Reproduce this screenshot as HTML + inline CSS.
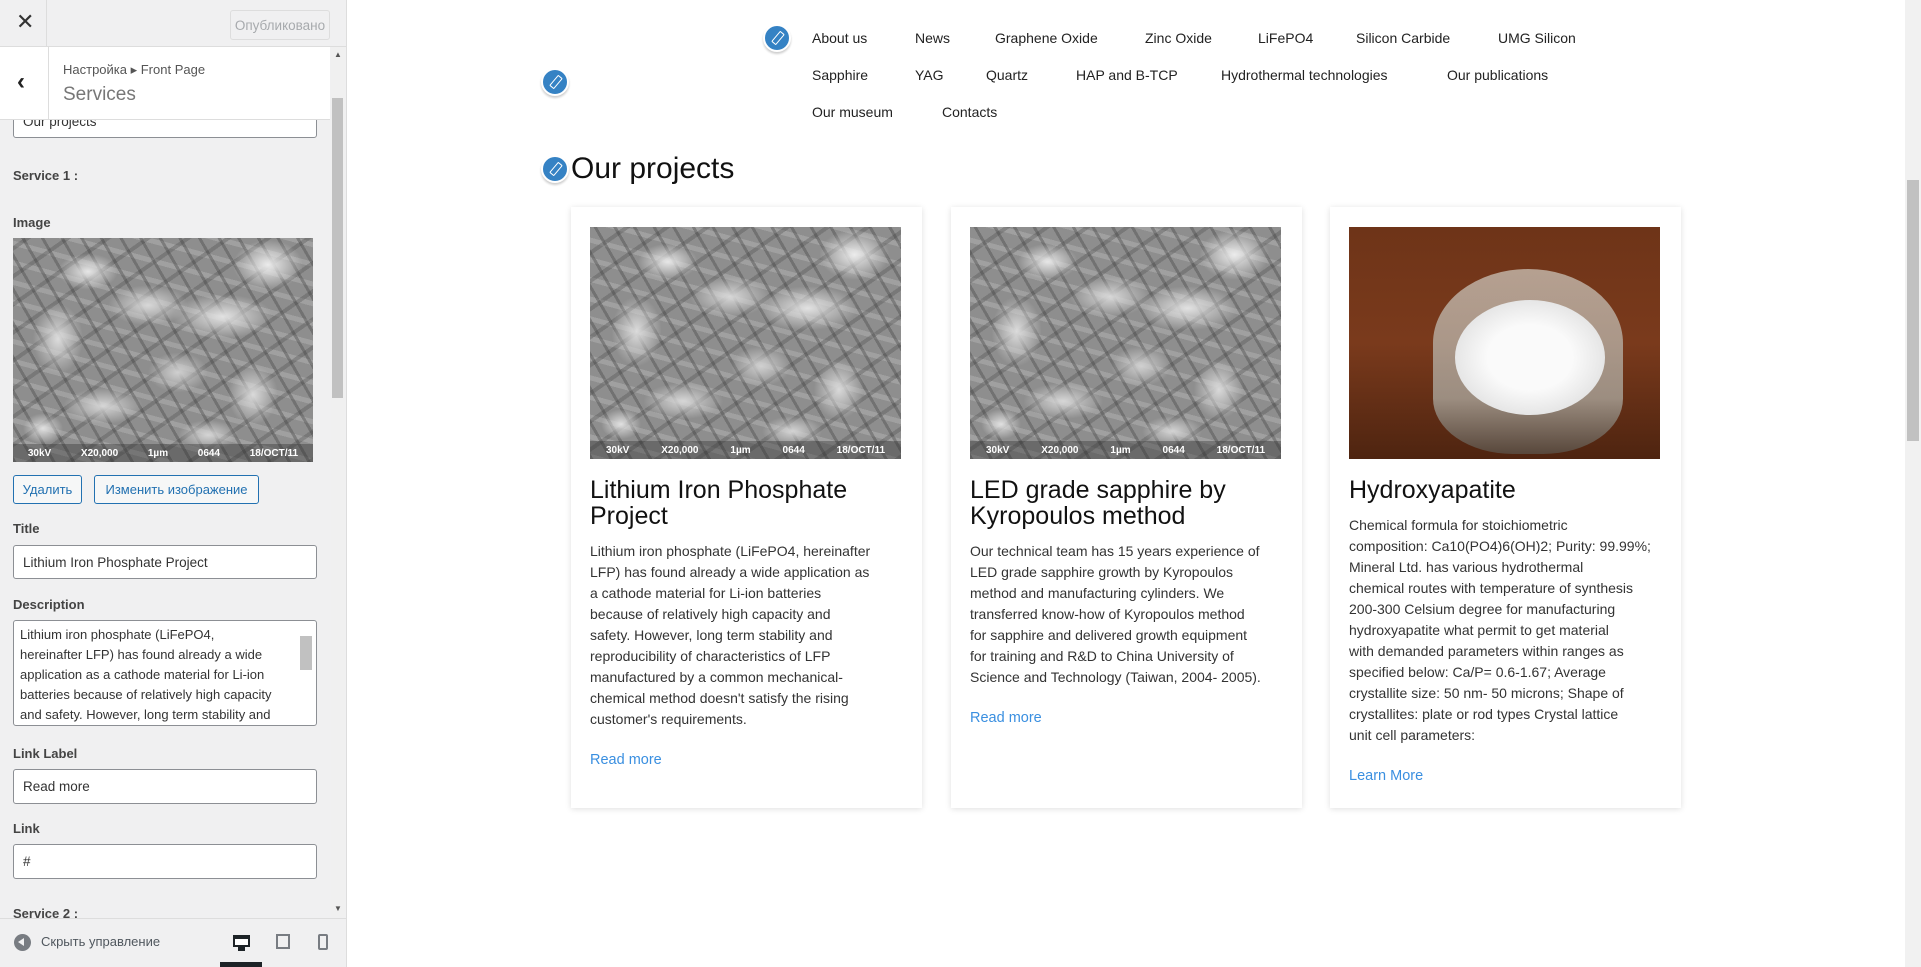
<!DOCTYPE html>
<html><head><meta charset="utf-8"><style>
*{box-sizing:border-box;margin:0;padding:0}
body{width:1921px;height:967px;overflow:hidden;background:#fff;font-family:"Liberation Sans",sans-serif;position:relative;color:#222}
.a{position:absolute}
#side{left:0;top:0;width:347px;height:967px;background:#f0f0f1;border-right:1px solid #ddd}
.lbl{position:absolute;left:13px;font-size:13px;font-weight:bold;color:#444}
.inp{position:absolute;left:13px;width:304px;background:#fff;border:1px solid #8c8f94;border-radius:3px;font-size:13.5px;color:#333;padding:0 9px;display:flex;align-items:center}
.btn{position:absolute;top:475px;height:29px;border:1px solid #2271b1;color:#2271b1;border-radius:3px;font-size:13px;display:flex;align-items:center;justify-content:center;background:#f6f7f7}
.nav{position:absolute;font-size:14px;color:#222}
.pen{position:absolute;width:28px;height:28px;border-radius:50%;background:#3582c4;border:2px solid #fff;box-shadow:0 2px 2px rgba(0,0,0,.2)}
.pen:after{content:"";position:absolute;left:10px;top:5px;width:4px;height:12px;border:1.5px solid #fff;transform:rotate(40deg);border-radius:1px}
.card{position:absolute;top:207px;width:351px;height:601px;background:#fff;box-shadow:0 1px 6px rgba(0,0,0,.13)}
.img{position:absolute;left:19px;top:20px;width:311px;height:232px}
.sem{overflow:hidden;background:
radial-gradient(ellipse 30px 18px at 25% 15%,#e6e6e6,transparent),
radial-gradient(ellipse 40px 20px at 45% 30%,#d8d8d8,transparent),
radial-gradient(ellipse 25px 35px at 15% 45%,#dcdcdc,transparent),
radial-gradient(ellipse 50px 22px at 70% 35%,#e2e2e2,transparent),
radial-gradient(ellipse 35px 25px at 85% 12%,#ececec,transparent),
radial-gradient(ellipse 30px 20px at 55% 60%,#d0d0d0,transparent),
radial-gradient(ellipse 40px 18px at 30% 75%,#d6d6d6,transparent),
radial-gradient(ellipse 25px 30px at 80% 70%,#dadada,transparent),
radial-gradient(ellipse 20px 15px at 10% 85%,#e0e0e0,transparent),
radial-gradient(ellipse 30px 15px at 65% 88%,#d4d4d4,transparent),
repeating-linear-gradient(60deg,rgba(60,60,60,.35) 0 3px,transparent 3px 17px),
repeating-linear-gradient(-35deg,rgba(70,70,70,.3) 0 4px,transparent 4px 23px),
repeating-linear-gradient(15deg,rgba(200,200,200,.3) 0 5px,transparent 5px 19px),
#8e8e8e}
.sem .bar{position:absolute;left:0;right:0;bottom:0;height:18px;font-size:10px;font-weight:bold;color:#fff;display:flex;justify-content:space-around;align-items:center;background:rgba(40,40,40,.35)}
.ttl{position:absolute;left:19px;top:270px;font-size:25px;line-height:26px;color:#111}
.dsc{position:absolute;left:19px;font-size:14px;line-height:21px;color:#333}
.lnk{position:absolute;left:19px;font-size:14.5px;color:#3a8fe0}
</style></head><body>
<div id="side" class="a">
 <div class="a" style="left:0;top:0;width:347px;height:47px;border-bottom:1px solid #ddd"></div>
 <div class="a" style="left:46px;top:0;width:1px;height:47px;background:#ddd"></div>
 <div class="a" style="left:16px;top:9px;font-size:22px;color:#333">✕</div>
 <div class="a" style="left:230px;top:10px;width:100px;height:30px;border:1px solid #ddd;border-radius:3px;color:#a7aaad;font-size:13.5px;display:flex;align-items:center;justify-content:center">Опубликовано</div>
 <div class="lbl" style="top:168px">Service 1 :</div>
 <div class="inp" style="top:104px;height:34px">Our projects</div>
 <div class="a" style="left:0;top:47px;width:330px;height:73px;background:#fff;border-bottom:1px solid #ddd"></div>
 <div class="a" style="left:48px;top:47px;width:1px;height:73px;background:#ddd"></div>
 <div class="a" style="left:17px;top:68px;font-size:24px;color:#222;font-weight:bold">‹</div>
 <div class="a" style="left:63px;top:62px;font-size:13px;color:#555">Настройка ▸ Front Page</div>
 <div class="a" style="left:63px;top:84px;font-size:19px;color:#777">Services</div>
 <div class="a" style="left:331px;top:47px;width:14px;height:870px;background:#f0f0f0"></div>
 <div class="a" style="left:332px;top:98px;width:11px;height:300px;background:#c1c1c1"></div>
 <div class="a" style="left:334px;top:50px;font-size:8px;color:#555">▲</div>
 <div class="a" style="left:334px;top:904px;font-size:8px;color:#555">▼</div>
 <div class="lbl" style="top:215px">Image</div>
 <div class="a sem" style="left:13px;top:238px;width:300px;height:224px"><div class="bar"><span>30kV</span><span>X20,000</span><span>1µm</span><span>0644</span><span>18/OCT/11</span></div></div>
 <div class="btn" style="left:13px;width:69px">Удалить</div>
 <div class="btn" style="left:94px;width:165px">Изменить изображение</div>
 <div class="lbl" style="top:521px">Title</div>
 <div class="inp" style="top:545px;height:34px">Lithium Iron Phosphate Project</div>
 <div class="lbl" style="top:597px">Description</div>
 <div class="inp" style="top:620px;height:106px;display:block;padding:4px 6px 0 6px;font-size:13px;line-height:20px;overflow:hidden">Lithium iron phosphate (LiFePO4,<br>hereinafter LFP) has found already a wide<br>application as a cathode material for Li-ion<br>batteries because of relatively high capacity<br>and safety. However, long term stability and</div>
 <div class="a" style="left:300px;top:636px;width:12px;height:34px;background:#c1c1c1"></div>
 <div class="lbl" style="top:746px">Link Label</div>
 <div class="inp" style="top:769px;height:35px">Read more</div>
 <div class="lbl" style="top:821px">Link</div>
 <div class="inp" style="top:844px;height:35px">#</div>
 <div class="lbl" style="top:906px">Service 2 :</div>
 <div class="a" style="left:0;top:918px;width:346px;height:49px;background:#f0f0f1;border-top:1px solid #ddd"></div>
 <div class="a" style="left:14px;top:934px;width:17px;height:17px;border-radius:50%;background:#787c82"></div>
 <div class="a" style="left:18px;top:938px;width:0;height:0;border-top:4.5px solid transparent;border-bottom:4.5px solid transparent;border-right:6px solid #f0f0f1"></div>
 <div class="a" style="left:41px;top:934px;font-size:13px;color:#50575e">Скрыть управление</div>
 <div class="a" style="left:233px;top:935px;width:17px;height:12px;border:2px solid #1d2327;border-top-width:4px;background:#fff"></div>
 <div class="a" style="left:238px;top:947px;width:7px;height:4px;background:#1d2327"></div>
 <div class="a" style="left:220px;top:962px;width:42px;height:5px;background:#1d2327"></div>
 <div class="a" style="left:276px;top:934px;width:14px;height:15px;border:2px solid #787c82"></div>
 <div class="a" style="left:318px;top:934px;width:10px;height:16px;border:2px solid #787c82;border-radius:2px"></div>
</div>

<div class="pen" style="left:763px;top:24px"></div>
<div class="pen" style="left:541px;top:68px"></div>
<div class="pen" style="left:541px;top:155px"></div>
<div class="nav" style="left:812px;top:30px">About us</div>
<div class="nav" style="left:915px;top:30px">News</div>
<div class="nav" style="left:995px;top:30px">Graphene Oxide</div>
<div class="nav" style="left:1145px;top:30px">Zinc Oxide</div>
<div class="nav" style="left:1258px;top:30px">LiFePO4</div>
<div class="nav" style="left:1356px;top:30px">Silicon Carbide</div>
<div class="nav" style="left:1498px;top:30px">UMG Silicon</div>
<div class="nav" style="left:812px;top:67px">Sapphire</div>
<div class="nav" style="left:915px;top:67px">YAG</div>
<div class="nav" style="left:986px;top:67px">Quartz</div>
<div class="nav" style="left:1076px;top:67px">HAP and B-TCP</div>
<div class="nav" style="left:1221px;top:67px">Hydrothermal technologies</div>
<div class="nav" style="left:1447px;top:67px">Our publications</div>
<div class="nav" style="left:812px;top:104px">Our museum</div>
<div class="nav" style="left:942px;top:104px">Contacts</div>
<div class="a" style="left:571px;top:152px;font-size:30px;color:#111">Our projects</div>

<div class="card" style="left:571px">
 <div class="img sem"><div class="bar"><span>30kV</span><span>X20,000</span><span>1µm</span><span>0644</span><span>18/OCT/11</span></div></div>
 <div class="ttl">Lithium Iron Phosphate<br>Project</div>
 <div class="dsc" style="top:334px">Lithium iron phosphate (LiFePO4, hereinafter<br>LFP) has found already a wide application as<br>a cathode material for Li-ion batteries<br>because of relatively high capacity and<br>safety. However, long term stability and<br>reproducibility of characteristics of LFP<br>manufactured by a common mechanical-<br>chemical method doesn't satisfy the rising<br>customer's requirements.</div>
 <div class="lnk" style="top:545px">Read more</div>
</div>
<div class="card" style="left:951px">
 <div class="img sem"><div class="bar"><span>30kV</span><span>X20,000</span><span>1µm</span><span>0644</span><span>18/OCT/11</span></div></div>
 <div class="ttl">LED grade sapphire by<br>Kyropoulos method</div>
 <div class="dsc" style="top:334px">Our technical team has 15 years experience of<br>LED grade sapphire growth by Kyropoulos<br>method and manufacturing cylinders. We<br>transferred know-how of Kyropoulos method<br>for sapphire and delivered growth equipment<br>for training and R&amp;D to China University of<br>Science and Technology (Taiwan, 2004- 2005).</div>
 <div class="lnk" style="top:503px">Read more</div>
</div>
<div class="card" style="left:1330px">
 <div class="img" style="background:linear-gradient(180deg,#6e3418,#7a3a1c 50%,#4e2410);overflow:hidden">
  <div class="a" style="left:84px;top:42px;width:190px;height:185px;border-radius:50% 50% 42% 42%/40% 40% 30% 30%;background:linear-gradient(180deg,rgba(210,205,195,.7),rgba(170,165,155,.8) 70%,rgba(90,80,70,.8))"></div>
  <div class="a" style="left:106px;top:73px;width:150px;height:115px;border-radius:50%;background:radial-gradient(ellipse at 50% 50%,#fafafa 40%,#e6e6e6 70%,#cfcfcf)"></div>
 </div>
 <div class="ttl">Hydroxyapatite</div>
 <div class="dsc" style="top:308px">Chemical formula for stoichiometric<br>composition: Ca10(PO4)6(OH)2; Purity: 99.99%;<br>Mineral Ltd. has various hydrothermal<br>chemical routes with temperature of synthesis<br>200-300 Celsium degree for manufacturing<br>hydroxyapatite what permit to get material<br>with demanded parameters within ranges as<br>specified below: Ca/P= 0.6-1.67; Average<br>crystallite size: 50 nm- 50 microns; Shape of<br>crystallites: plate or rod types Crystal lattice<br>unit cell parameters:</div>
 <div class="lnk" style="top:561px">Learn More</div>
</div>
<div class="a" style="left:1905px;top:0;width:16px;height:967px;background:#f1f1f1"></div>
<div class="a" style="left:1907px;top:180px;width:12px;height:261px;background:#c1c1c1"></div>
</body></html>
